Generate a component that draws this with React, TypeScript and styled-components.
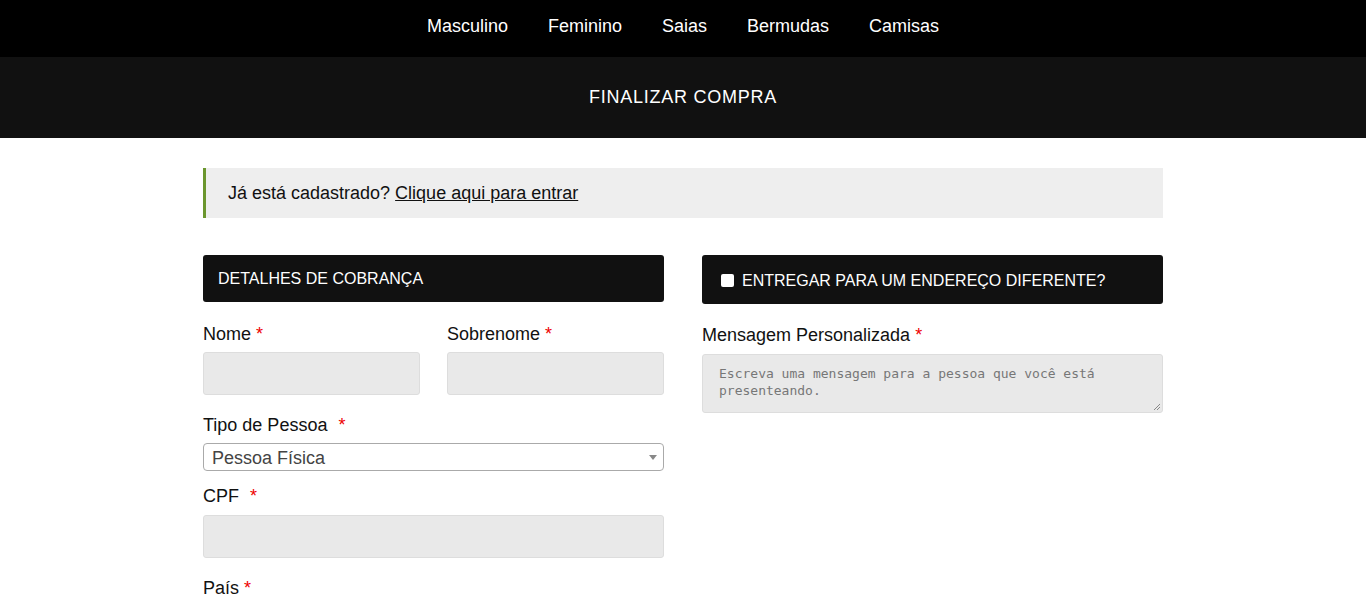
import React from "react";
import styled, { createGlobalStyle } from "styled-components";

const Global = createGlobalStyle`
  html, body { margin: 0; padding: 0; background: #fff; }
  body { font-family: "Liberation Sans", Arial, sans-serif; color: #111; }
  * { box-sizing: border-box; }
`;

const Nav = styled.nav`
  height: 57px;
  background: #000;
  display: flex;
  justify-content: center;
  align-items: center;
  gap: 40px;
  padding-bottom: 4px;
`;

const NavLink = styled.a`
  color: #fff;
  font-size: 18px;
  text-decoration: none;
`;

const TitleBar = styled.div`
  height: 81px;
  background: #111;
  display: flex;
  justify-content: center;
  align-items: center;
  color: #fff;
  font-size: 18px;
  letter-spacing: 0.75px;
`;

const Main = styled.main`
  width: 960px;
  margin: 30px auto 0;
`;

const Notice = styled.div`
  height: 50px;
  background: #eee;
  border-left: 3px solid #6b962e;
  display: flex;
  align-items: center;
  padding-left: 22px;
  font-size: 18px;
  color: #111;
  a { color: #111; text-decoration: underline; }
`;

const Columns = styled.div`
  display: grid;
  grid-template-columns: 461px 461px;
  column-gap: 38px;
  margin-top: 37px;
`;

const Column = styled.div`
  display: flex;
  flex-direction: column;
`;

const Header = styled.div<{ $h: number }>`
  height: ${(p) => p.$h}px;
  background: #111;
  border-radius: 3px;
  color: #fff;
  display: flex;
  align-items: center;
  gap: 8px;
  padding-left: ${(p) => (p.$h > 48 ? 19 : 15)}px;
  font-size: 16px;
  padding-top: ${(p) => (p.$h > 48 ? 2 : 0)}px;
`;

const Check = styled.span`
  width: 13px;
  height: 13px;
  background: #fff;
  border-radius: 2px;
  display: inline-block;
`;

const Row = styled.div`
  display: grid;
  grid-template-columns: 217px 217px;
  column-gap: 27px;
`;

const Field = styled.div<{ $mt: number }>`
  display: flex;
  flex-direction: column;
  margin-top: ${(p) => p.$mt}px;
`;

const Label = styled.label<{ $mb: number }>`
  font-size: 18px;
  line-height: 21px;
  color: #111;
  margin-bottom: ${(p) => p.$mb}px;
`;

const Req = styled.span<{ $gap?: boolean }>`
  color: #e00;
  margin-left: ${(p) => (p.$gap ? 6 : 0)}px;
`;

const Input = styled.div`
  height: 43px;
  background: #e9e9e9;
  border: 1px solid #ddd;
  border-radius: 3px;
`;

const Select = styled.div`
  height: 28px;
  border: 1px solid #aaa;
  border-radius: 4px;
  background: #fff;
  display: flex;
  align-items: center;
  justify-content: space-between;
  padding: 2px 6px 0 8px;
  font-size: 18px;
  color: #444;
`;

const Arrow = styled.span`
  width: 0;
  height: 0;
  border-left: 4px solid transparent;
  border-right: 4px solid transparent;
  border-top: 5px solid #888;
  margin-top: -2px;
`;

const TextArea = styled.div`
  position: relative;
  height: 59px;
  background: #e9e9e9;
  border: 1px solid #ddd;
  border-radius: 3px;
  padding: 10px 16px;
  font-family: "DejaVu Sans Mono", "Liberation Mono", monospace;
  font-size: 13px;
  line-height: 17px;
  color: #777;
`;

const Grip = styled.svg`
  position: absolute;
  right: 1px;
  bottom: 1px;
`;

export default function App() {
  return (
    <>
      <Global />
      <Nav>
        <NavLink>Masculino</NavLink>
        <NavLink>Feminino</NavLink>
        <NavLink>Saias</NavLink>
        <NavLink>Bermudas</NavLink>
        <NavLink>Camisas</NavLink>
      </Nav>
      <TitleBar>FINALIZAR COMPRA</TitleBar>
      <Main>
        <Notice>
          Já está cadastrado?&nbsp;<a href="#">Clique aqui para entrar</a>
        </Notice>
        <Columns>
          <Column>
            <Header $h={47}>DETALHES DE COBRANÇA</Header>
            <Row>
              <Field $mt={22}>
                <Label $mb={7}>
                  Nome <Req>*</Req>
                </Label>
                <Input />
              </Field>
              <Field $mt={22}>
                <Label $mb={7}>
                  Sobrenome <Req>*</Req>
                </Label>
                <Input />
              </Field>
            </Row>
            <Field $mt={20}>
              <Label $mb={7}>
                Tipo de Pessoa <Req $gap>*</Req>
              </Label>
              <Select>
                <span>Pessoa Física</span>
                <Arrow />
              </Select>
            </Field>
            <Field $mt={15}>
              <Label $mb={8}>
                CPF <Req $gap>*</Req>
              </Label>
              <Input />
            </Field>
            <Field $mt={20}>
              <Label $mb={0}>
                País <Req>*</Req>
              </Label>
            </Field>
          </Column>
          <Column>
            <Header $h={49}>
              <Check />
              ENTREGAR PARA UM ENDEREÇO DIFERENTE?
            </Header>
            <Field $mt={21}>
              <Label $mb={8}>
                Mensagem Personalizada <Req>*</Req>
              </Label>
              <TextArea>
                Escreva uma mensagem para a pessoa que você está presenteando.
                <Grip width="9" height="9" viewBox="0 0 9 9">
                  <path d="M8 2 L2 8 M8 5 L5 8" stroke="#888" strokeWidth="1" />
                </Grip>
              </TextArea>
            </Field>
          </Column>
        </Columns>
      </Main>
    </>
  );
}
